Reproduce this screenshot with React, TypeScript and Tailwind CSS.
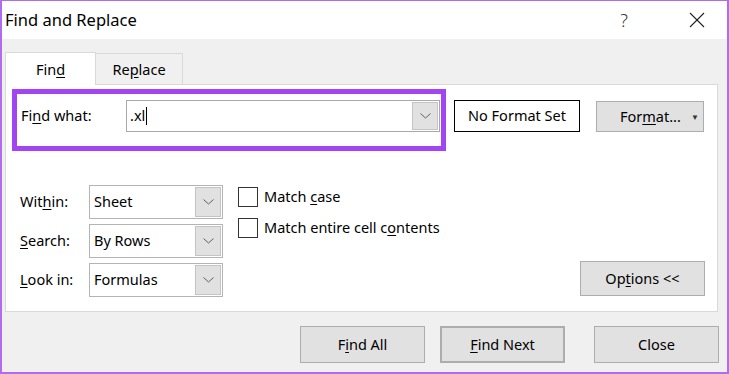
import type { ReactNode } from "react";

const font = { fontFamily: '"Noto Sans", "Open Sans", sans-serif' };

function Chevron() {
  return (
    <svg width="11" height="6" viewBox="0 0 11 6" fill="none">
      <polyline points="0.5,0.5 5.5,5 10.5,0.5" stroke="#606060" strokeWidth="1" />
    </svg>
  );
}

function DropBtn({ w = "w-[26px]" }: { w?: string }) {
  return (
    <div className={`${w} self-stretch m-[1px] flex items-center justify-center bg-[#e1e1e1] border border-[#c4c4c4]`}>
      <Chevron />
    </div>
  );
}

function Select({ value }: { value: string }) {
  return (
    <div className="w-[134px] h-[34px] flex items-stretch bg-white border border-[#b4b4b4]">
      <div className="flex-1 flex items-center pl-[4px]">{value}</div>
      <DropBtn />
    </div>
  );
}

function Btn({ children, className = "" }: { children: ReactNode; className?: string }) {
  return (
    <div
      className={`w-[125px] flex items-center justify-center bg-[#e1e1e1] border border-[#adadad] ${className}`}
    >
      {children}
    </div>
  );
}

function Check({ children }: { children: ReactNode }) {
  return (
    <div className="flex items-center h-[20px]">
      <div className="w-[20px] h-[20px] border border-[#333] bg-white" />
      <span className="ml-[6px]">{children}</span>
    </div>
  );
}

export default function App() {
  return (
    <div
      style={font}
      className="w-[729px] h-[374px] flex flex-col border-x-2 border-b-2 border-t border-[#b06cef] text-[14.5px] text-black bg-[#f0f0f0]"
    >
      {/* title bar */}
      <div className="h-[38px] flex items-center bg-white pl-[3px] shrink-0">
        <span className="text-[16.5px]">Find and Replace</span>
        <span className="ml-auto text-[18px] font-light text-[#333] mr-[61px]">?</span>
        <svg width="16" height="16" viewBox="0 0 16 16" className="mr-[22px]">
          <line x1="1" y1="1" x2="15" y2="15" stroke="#222" strokeWidth="1.1" />
          <line x1="15" y1="1" x2="1" y2="15" stroke="#222" strokeWidth="1.1" />
        </svg>
      </div>

      {/* body */}
      <div className="flex-1 flex flex-col pl-[3px] pr-[9px] pt-[13px]">
        <div className="flex items-end">
          <div className="w-[91px] h-[33px] bg-white border border-b-0 border-[#d9d9d9] -mb-px relative flex items-center justify-center pt-[2px]">
            Fin<u className="underline-offset-2">d</u>
          </div>
          <div className="w-[87px] h-[31px] border border-l-0 border-b-0 border-[#d9d9d9] flex items-center justify-center pt-[2px]">
            Re<u className="underline-offset-2">p</u>lace
          </div>
        </div>

        <div className="h-[228px] bg-white border border-[#d9d9d9] flex flex-col">
          {/* find row */}
          <div className="flex items-start">
            <div className="ml-[6px] mt-[4px] w-[434px] h-[62px] border-[5px] border-[#a244f4] pt-[6px] pl-[4px]">
              <div className="flex items-center">
                <span className="w-[105px]">
                  Fi<u className="underline-offset-2">n</u>d what:
                </span>
                <div className="w-[314px] h-[32px] flex items-stretch border border-[#a8a8a8] bg-white">
                  <div className="flex-1 flex items-center pl-[3px]">
                    .xl<span className="inline-block w-px h-[18px] bg-black ml-px" />
                  </div>
                  <DropBtn />
                </div>
              </div>
            </div>
            <div className="ml-[8px] mt-[15px] w-[126px] h-[32px] border border-black flex items-center justify-center">
              No Format Set
            </div>
            <div className="ml-[16px] mt-[16px] w-[108px] h-[31px] bg-[#e1e1e1] border border-[#adadad] flex items-center pl-[23px]">
              For<u className="underline-offset-2">m</u>at...
              <span className="ml-[10px] text-[8px] text-[#333]">▼</span>
            </div>
          </div>

          {/* options area */}
          <div className="flex-1 flex mt-[34px]">
            <div className="flex flex-col gap-[5px] pl-[14px]">
              <div className="flex items-center">
                <span className="w-[69px]">
                  Wit<u className="underline-offset-2">h</u>in:
                </span>
                <Select value="Sheet" />
              </div>
              <div className="flex items-center">
                <span className="w-[69px]">
                  <u className="underline-offset-2">S</u>earch:
                </span>
                <Select value="By Rows" />
              </div>
              <div className="flex items-center">
                <span className="w-[69px]">
                  <u className="underline-offset-2">L</u>ook in:
                </span>
                <Select value="Formulas" />
              </div>
            </div>
            <div className="ml-[15px] mt-[2px] flex flex-col gap-[11px]">
              <Check>
                Match <u className="underline-offset-2">c</u>ase
              </Check>
              <Check>
                Match entire cell c<u className="underline-offset-2">o</u>ntents
              </Check>
            </div>
            <Btn className="ml-auto self-end mb-[15px] mr-[12px] h-[35px]">
              Op<u className="underline-offset-2">t</u>ions &lt;&lt;
            </Btn>
          </div>
        </div>

        {/* bottom buttons */}
        <div className="flex justify-end mt-[14px]">
          <Btn className="h-[37px]">
            F<u className="underline-offset-2">i</u>nd All
          </Btn>
          <Btn className="h-[37px] ml-[15px] border-2 border-[#0078d7]">
            <u className="underline-offset-2">F</u>ind Next
          </Btn>
          <Btn className="h-[37px] ml-[29px] mr-[-1px]">Close</Btn>
        </div>
      </div>
    </div>
  );
}
